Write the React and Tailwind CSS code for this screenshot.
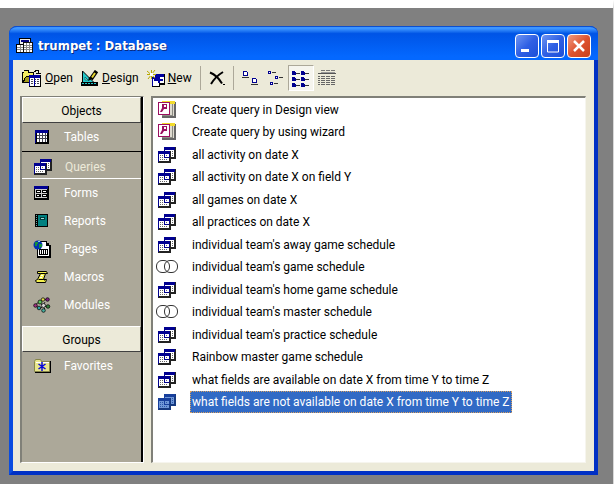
import { useState } from 'react'

const objectTypes = [
  { name: 'Tables', icon: TableIcon },
  { name: 'Queries', icon: QueryIcon },
  { name: 'Forms', icon: FormIcon },
  { name: 'Reports', icon: ReportIcon },
  { name: 'Pages', icon: PageIcon },
  { name: 'Macros', icon: MacroIcon },
  { name: 'Modules', icon: ModuleIcon },
]

const queries = [
  { name: 'Create query in Design view', icon: WizardIcon },
  { name: 'Create query by using wizard', icon: WizardIcon },
  { name: 'all activity on date X', icon: QueryIcon },
  { name: 'all activity on date X on field Y', icon: QueryIcon },
  { name: 'all games on date X', icon: QueryIcon },
  { name: 'all practices on date X', icon: QueryIcon },
  { name: "individual team's away game schedule", icon: QueryIcon },
  { name: "individual team's game schedule", icon: UnionIcon },
  { name: "individual team's home game schedule", icon: QueryIcon },
  { name: "individual team's master schedule", icon: UnionIcon },
  { name: "individual team's practice schedule", icon: QueryIcon },
  { name: 'Rainbow master game schedule', icon: QueryIcon },
  { name: 'what fields are available on date X from time Y to time Z', icon: QueryIcon },
  { name: 'what fields are not available on date X from time Y to time Z', icon: QueryIcon },
]

function QueryIcon({ selected }) {
  const ink = selected ? '#16397f' : '#222'
  const navy = selected ? '#173f9c' : '#000090'
  const paper = selected ? '#6f97d8' : '#fff'
  const dots = selected ? '#2d58a8' : '#666'
  return (
    <svg width="18" height="16" viewBox="0 0 18 16" shapeRendering="crispEdges">
      <path fill={ink} d="M6 0h12v12H6z" />
      <path fill={navy} d="M6 0h11v3H6zM6 0h1v10H6z" />
      <path fill={paper} d="M7 3h9v7H7z" />
      <path stroke={dots} strokeDasharray="1 1" d="M8 4.500h8M8 6.500h8M8 8.500h8" />
      <path fill={ink} d="M0 4h13v12H0z" />
      <path fill={navy} d="M0 4h12v3H0zM0 4h1v11H0zM11 4h1v6h-1z" />
      <path fill={paper} d="M1 7h10v7H1z" />
      <path stroke={dots} strokeDasharray="1 1" d="M2 8.500h8M2 10.500h8M2 12.500h8" />
      <path stroke={navy} d="M6.500 7v4M7 10.500h4" />
    </svg>
  )
}

function TitleIcon() {
  return (
    <svg width="18" height="16" viewBox="0 0 18 16" shapeRendering="crispEdges">
      <path fill="#000" d="M3 0h12v10H3z" />
      <path fill="#eee" d="M4 1h10v8H4z" />
      <path fill="#000080" d="M5 2h8v2H5z" />
      <path fill="#000" d="M0 6h9v9H0z" />
      <path fill="#fff" d="M1 7h7v7H1z" />
      <path stroke="#888" d="M1 9.500h7M1 11.500h7M4.500 7v7" />
      <path fill="#111" d="M7 4h10v11H7z" />
      <path fill="#fff" d="M8 5h8v9H8z" />
      <path stroke="#888" d="M8 7.500h8M8 9.500h8M8 11.500h8M10.500 5v9M13.500 5v9" />
    </svg>
  )
}

function TableIcon() {
  return (
    <svg width="16" height="15" viewBox="0 0 16 15" shapeRendering="crispEdges">
      <path fill="#000" d="M1 0h14v14H1z" />
      <path fill="#000090" d="M1 0h13v3H1zM1 0h1v13H1z" />
      <path fill="#fff" d="M3 3h10v9H3z" />
      <path stroke="#445" d="M3 5.500h10M3 8.500h10M5.500 3v9M8.500 3v9M11.500 3v9" />
    </svg>
  )
}

function FormIcon() {
  return (
    <svg width="16" height="14" viewBox="0 0 16 14" shapeRendering="crispEdges">
      <path fill="#000" d="M0 0h15v14H0z" />
      <path fill="#000090" d="M0 0h14v3H0z" />
      <path fill="#ccc" d="M1 3h12v9H1z" />
      <path fill="#000" d="M2 4h5v3H2zM8 4h5v3H8zM2 8h5v3H2zM8 8h5v3H8z" />
      <path fill="#fff" d="M3 5h3v1H3zM9 5h3v1H9zM3 9h2v1H3zM9 9h3v1H9z" />
    </svg>
  )
}

function ReportIcon() {
  return (
    <svg width="16" height="14" viewBox="0 0 16 14" shapeRendering="crispEdges">
      <path fill="#000" d="M1 0h13v13H1z" />
      <path fill="#008080" d="M4 1h9v11H4z" />
      <path stroke="#66a8a8" strokeDasharray="1 1" d="M2.500 1v11" />
      <path fill="#003c3c" d="M6 3h5v3H6z" />
      <path fill="#9fdcdc" d="M7 4h3v1H7z" />
    </svg>
  )
}

function PageIcon() {
  return (
    <svg width="18" height="18" viewBox="0 0 18 18" shapeRendering="crispEdges">
      <path fill="#000" d="M4 1h10v2h2v2h2v13H4z" />
      <path fill="#fff" d="M5 2h8v4h3v10H5z" />
      <path fill="#000" d="M6 9h9v6H6z" />
      <path stroke="#fff" d="M7.500 10v4M9.500 10v4M11.500 10v4M13.500 10v4" />
      <g shapeRendering="auto">
        <circle cx="5" cy="5" r="4.500" fill="#0030b0" />
        <path fill="#13913a" d="M2 2h3v2H4v2H2zM6 4h3v3H7v1H6z" />
        <path fill="#7fd0f0" d="M5 1h2v1H5z" />
      </g>
    </svg>
  )
}

function MacroIcon() {
  return (
    <svg width="16" height="14" viewBox="0 0 16 14">
      <path fill="#f4f04c" stroke="#000" d="M3.500 1.500h9l1 2h-2l-2 6h3l-1 3h-9l-1-2 2-1 3-6h-3z" />
      <path fill="none" stroke="#000" d="M6.500 3.500h5M4.500 9.500h5l1 1" />
      <path stroke="#fff" d="M7 5.500h2M6 7.500h2" />
    </svg>
  )
}

function ModuleIcon() {
  return (
    <svg width="18" height="16" viewBox="0 0 18 16">
      <path fill="none" stroke="#222" d="M2 8l4-3 4-3 4 1M6 5l4 4 5 1M3 9l4 3 3-3 2-4M9 14l3-3" />
      <g stroke="#000" strokeWidth=".7">
        <circle cx="2.500" cy="8.500" r="1.800" fill="#a03080" />
        <circle cx="7" cy="5" r="2" fill="#5cc45c" />
        <circle cx="10" cy="2.500" r="1.700" fill="#e4df50" />
        <circle cx="14.500" cy="2.500" r="1.800" fill="#7a1e80" />
        <circle cx="6" cy="11" r="1.800" fill="#2aa0a0" />
        <circle cx="10.500" cy="8.500" r="2" fill="#d8d8d8" />
        <circle cx="15" cy="9.500" r="1.800" fill="#308038" />
        <circle cx="10.500" cy="13.500" r="1.800" fill="#46b0a0" />
      </g>
    </svg>
  )
}

function FavoritesIcon() {
  return (
    <svg width="17" height="14" viewBox="0 0 17 14">
      <path fill="#000" d="M1 2h16v12H1z" />
      <path fill="#e9e68c" stroke="#86864a" d="M.5 12.500v-10l1-2h5l1 2h8v10z" />
      <path stroke="#fff" d="M2 3.500h13" />
      <path stroke="#0808d8" strokeWidth="1.500" d="M8 3v9M4.500 5l7 5M11.500 5l-7 5" />
    </svg>
  )
}

function WizardIcon() {
  return (
    <svg width="18" height="18" viewBox="0 0 18 18" shapeRendering="crispEdges">
      <path fill="#666" d="M4 1h14v16H4z" />
      <path fill="#f3dc2c" d="M4 0h13v3H4z" />
      <path fill="#dedbd0" d="M4 3h12v12H4z" />
      <path stroke="#8c8c84" d="M14.500 3v12M4 14.500h10" />
      <path fill="#9b0f60" d="M0 1h12v13H0z" />
      <path fill="#fff" d="M1 2h10v11H1z" />
      <g shapeRendering="auto">
        <path fill="#9b0f60" d="M4 3h5v5H6l-2 3H2l2-4z" />
        <path fill="#fff" d="M6 4h2v2H6z" />
      </g>
    </svg>
  )
}

function UnionIcon() {
  return (
    <svg width="22" height="14" viewBox="0 0 22 14" fill="none" stroke="#333">
      <rect x=".5" y=".5" width="13" height="12" rx="5.500" />
      <rect x="8.500" y=".5" width="13" height="12" rx="5.500" />
    </svg>
  )
}

function OpenIcon() {
  return (
    <svg width="20" height="18" viewBox="0 0 20 18" shapeRendering="crispEdges">
      <path fill="#000" d="M0 3h2V1h5v2h5v4h2v7H0z" />
      <path fill="#f5ee62" d="M1 4h1V2h4v2h5v3H4L1 12z" />
      <path fill="#a29a1c" d="M4 8h9v5H2z" />
      <path stroke="#000" d="M12 2.500h2M13 1.500h4M16.500 2v3M14 4.500h5" />
      <path fill="#000" d="M7 6h12v12H7z" />
      <path fill="#0000a0" d="M7 6h11v3H7zM7 6h1v11H7z" />
      <path fill="#fff" d="M8 9h10v8H8z" />
      <path stroke="#445" strokeDasharray="2 1" d="M9 10.500h8M9 12.500h8M9 14.500h8" />
      <path stroke="#0000a0" d="M12.500 9v8" />
    </svg>
  )
}

function DesignIcon() {
  return (
    <svg width="18" height="17" viewBox="0 0 18 17">
      <path fill="#28c8c8" stroke="#000" d="M1.500 1v11.500H13z" />
      <path fill="#ecead9" stroke="#087c7c" d="M4 7v3h3z" />
      <path fill="#000" d="M0 12h17v4H0z" />
      <path stroke="#28c8c8" strokeDasharray="2 1" d="M1 13.500h15" />
      <path stroke="#000" strokeWidth="4" d="M15.500 1L10 9" />
      <path stroke="#e8d832" strokeWidth="2" d="M14 3l-3 4.500" />
      <path fill="#000" d="M8 7l3 2-4 2z" />
    </svg>
  )
}

function NewIcon() {
  return (
    <svg width="18" height="17" viewBox="0 0 18 17" shapeRendering="crispEdges">
      <path fill="#000" d="M8 4h10v11H8z" />
      <path fill="#0000a0" d="M8 4h9v3H8z" />
      <path fill="#fff" d="M9 7h8v6H9z" />
      <path fill="#000" d="M5 7h8v10H5z" />
      <path fill="#0000a0" d="M5 7h8v2H5zM5 7h1v9H5z" />
      <path fill="#fff" d="M6 9h6v7H6z" />
      <path stroke="#0000a0" strokeWidth="2" d="M7 10h9M12 7v6" />
      <path shapeRendering="auto" stroke="#b8a800" d="M0 1l8 7M8 0L1 9M4.500 0v9M0 4.500h9" />
      <path fill="#fff" d="M3 3h3v3H3z" />
    </svg>
  )
}

function DeleteIcon() {
  return (
    <svg width="16" height="15" viewBox="0 0 16 15" fill="none" stroke="#000">
      <path strokeWidth="2" d="M1 1.500c5 2 9 6 12 11" />
      <path strokeWidth="2" d="M14 1C9 4 5 8 2 13" />
      <path d="M14 13.500h2" />
    </svg>
  )
}

function LargeIconsIcon() {
  return (
    <svg width="17" height="16" viewBox="0 0 17 16" fill="none" shapeRendering="crispEdges">
      <path stroke="#000090" fill="#fff" d="M1.500 1.500h3l1 1v3h-4zM10.500 8.500h3l1 1v3h-4z" />
      <path stroke="#333" d="M0 7.500h7M9 14.500h7" />
    </svg>
  )
}

function SmallIconsIcon() {
  return (
    <svg width="17" height="16" viewBox="0 0 17 16" fill="none" shapeRendering="crispEdges">
      <path stroke="#000090" fill="#fff" d="M1.500 1.500h2v2h-2zM8.500 6.500h2v2h-2zM3.500 12.500h2v2h-2z" />
      <path stroke="#333" d="M5 2.500h4M12 7.500h4M7 13.500h4" />
    </svg>
  )
}

function ListIcon() {
  return (
    <svg width="18" height="17" viewBox="0 0 18 17" fill="none" shapeRendering="crispEdges">
      <path fill="#000090" d="M0 1h3v1h1v3H0zM9 1h3v1h1v3H9zM0 7h3v1h1v3H0zM9 7h3v1h1v3H9zM0 13h3v1h1v3H0zM9 13h3v1h1v3H9z" />
      <path stroke="#333" d="M4 3.500h4M13 3.500h4M4 9.500h4M13 9.500h4M4 15.500h4M13 15.500h4" />
    </svg>
  )
}

function DetailsIcon() {
  return (
    <svg width="18" height="16" viewBox="0 0 18 16" fill="none" shapeRendering="crispEdges">
      <path stroke="#777" d="M3 .5h4M8 .5h4M13 .5h4" />
      <path stroke="#555" d="M0 3.500h18" />
      <path stroke="#999" d="M3 2.500h14" />
      <path stroke="#666" strokeDasharray="2 1 4 1 4 1 4 1" d="M0 6.500h18M0 8.500h18M0 10.500h18M0 12.500h18M0 14.500h18" />
    </svg>
  )
}

function CaptionButton({ label, className, children }) {
  return (
    <button
      aria-label={label}
      className={`flex size-6 items-center justify-center rounded border border-white bg-linear-to-br ${className}`}
    >
      <svg width="16" height="16" viewBox="0 0 16 16" fill="none" stroke="#fff">
        {children}
      </svg>
    </button>
  )
}

function TitleBar() {
  return (
    <header className="flex h-[34px] shrink-0 items-center gap-0.5 rounded-t-lg border-t border-[#0b4fd0] bg-linear-to-b from-[#3d95ff] from-5% via-[#0054e6] via-20% to-[#0468ff] to-90% px-[7px] pt-1">
      <TitleIcon />
      <h1 className="ml-0.5 flex-1 font-['DejaVu_Sans_Condensed','DejaVu_Sans',sans-serif] text-[13px] leading-4 font-bold text-white [text-shadow:1px_1px_#0a2a80]">
        trumpet : Database
      </h1>
      <CaptionButton label="Minimize" className="from-[#6f94f2] via-[#2f5fe4] to-[#1c4fd8]">
        <path strokeWidth="3" d="M2 12.500h8" />
      </CaptionButton>
      <CaptionButton label="Maximize" className="from-[#6f94f2] via-[#2f5fe4] to-[#1c4fd8]">
        <path d="M2.500 3v11h11V3" />
        <path strokeWidth="3" d="M2 3.500h12" />
      </CaptionButton>
      <CaptionButton label="Close" className="from-[#f09a80] via-[#de5330] to-[#c8401c]">
        <path strokeWidth="2.500" d="M3 3l10 10M13 3L3 13" />
      </CaptionButton>
    </header>
  )
}

function Separator() {
  return <div className="h-6 w-px bg-[#aca899]" />
}

function Toolbar() {
  return (
    <div className="flex h-9 shrink-0 items-center pl-[9px]">
      <button className="flex items-center gap-[3px]">
        <OpenIcon />
        <span><u>O</u>pen</span>
      </button>
      <button className="ml-2 flex items-center gap-[3px]">
        <DesignIcon />
        <span><u>D</u>esign</span>
      </button>
      <button className="ml-2 flex items-center gap-[3px]">
        <NewIcon />
        <span><u>N</u>ew</span>
      </button>
      <div className="ml-2 flex items-center gap-2">
        <Separator />
        <button aria-label="Delete"><DeleteIcon /></button>
        <Separator />
        <button aria-label="Large icons"><LargeIconsIcon /></button>
        <button aria-label="Small icons"><SmallIconsIcon /></button>
      </div>
      <button
        aria-label="List"
        className="ml-1 flex size-[26px] items-center justify-center border border-t-[#aca899] border-r-white border-b-white border-l-[#aca899] bg-[#f6f5ee]"
      >
        <ListIcon />
      </button>
      <button aria-label="Details" className="ml-1"><DetailsIcon /></button>
    </div>
  )
}

function GroupHeader({ children }) {
  return (
    <button className="block h-[26px] w-full border border-t-white border-r-[#716f64] border-b-[#404040] border-l-white bg-[#ecead9] pt-0.5 text-center">
      {children}
    </button>
  )
}

function Sidebar({ current, onSelect }) {
  return (
    <nav className="w-[124px] shrink-0 border-t border-r border-b border-l-2 border-t-[#808078] border-r-white border-b-white border-l-[#808078] bg-[#aca899]">
      <div className="h-full border-r-2 border-black">
        <GroupHeader>Objects</GroupHeader>
        {objectTypes.map(({ name, icon: Icon }) => (
          <button
            key={name}
            onClick={() => onSelect(name)}
            className={`flex h-7 w-full items-center border-y ${
              name === current ? 'border-t-black border-b-white pt-1 pl-px text-[#ecead9]' : 'border-transparent text-white'
            }`}
          >
            <span className="ml-2.5 flex w-5 justify-center"><Icon /></span>
            <span className="ml-3">{name}</span>
          </button>
        ))}
        <div className="mt-[7px]">
          <GroupHeader>Groups</GroupHeader>
          <button className="flex h-7 w-full items-center text-white">
            <span className="ml-2.5 flex w-5 justify-center"><FavoritesIcon /></span>
            <span className="ml-3">Favorites</span>
          </button>
        </div>
      </div>
    </nav>
  )
}

function QueryList({ selected, onSelect }) {
  return (
    <ul className="min-w-0 flex-1 overflow-hidden border-t-2 border-r border-b border-l-2 border-t-[#808078] border-r-[#f6f5ee] border-b-[#f6f5ee] border-l-[#808078] bg-white pt-px">
      {queries.map(({ name, icon: Icon }) => (
        <li key={name} className="h-[22px] even:h-[23px]">
          <button onClick={() => onSelect(name)} className="flex h-[22px] items-center whitespace-nowrap">
            <span className="ml-0.5 flex w-6 justify-center"><Icon selected={name === selected} /></span>
            <span
              className={`ml-[11px] border border-dotted px-px leading-5 ${
                name === selected ? 'border-[#d8a060] bg-[#316ac5] text-white' : 'border-transparent'
              }`}
            >
              {name}
            </span>
          </button>
        </li>
      ))}
    </ul>
  )
}

export default function App() {
  const [objectType, setObjectType] = useState('Queries')
  const [selected, setSelected] = useState(queries[13].name)

  return (
    <div className="flex h-screen flex-col border-t-8 border-r border-t-white border-r-[#d8d8d8] bg-[#808080] pt-[18px] pr-[15px] pb-[9px] pl-[9px] font-['Roboto','Liberation_Sans',sans-serif] text-xs leading-4 text-black">
      <main className="flex min-h-0 flex-1 flex-col rounded-t-lg bg-[#0540d8]">
        <TitleBar />
        <div className="flex min-h-0 flex-1 flex-col border-r-4 border-b-4 border-l-4 border-r-[#0030c4] border-b-[#0030c4] border-l-[#0a4ce0] bg-[#ecead9]">
          <Toolbar />
          <div className="flex min-h-0 flex-1 gap-[7px] pr-2 pb-2 pl-[7px]">
            <Sidebar current={objectType} onSelect={setObjectType} />
            <QueryList selected={selected} onSelect={setSelected} />
          </div>
        </div>
      </main>
    </div>
  )
}
